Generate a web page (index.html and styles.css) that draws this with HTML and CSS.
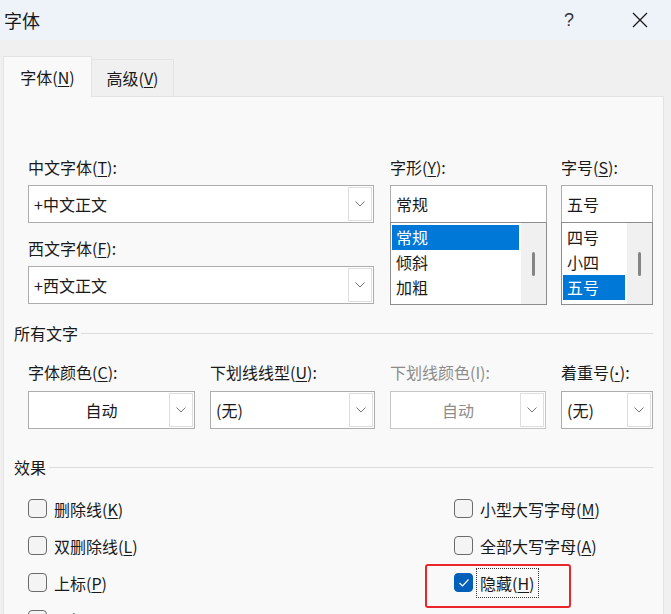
FILE: index.html
```html
<!DOCTYPE html>
<html lang="zh-CN">
<head>
  <meta charset="UTF-8">
  <title>字体</title>
  <link rel="stylesheet" href="styles.css">
</head>
<body>
<div class="titlebar">
  <span class="title">字体</span>
  <span class="help">?</span>
  <svg class="close" width="16" height="16" viewBox="0 0 16 16"><path d="M1 1L15 15M15 1L1 15" stroke="#1a1a1a" stroke-width="1.3" fill="none"/></svg>
</div>

<div class="tabs">
  <div class="tab active">字体(<u>N</u>)</div>
  <div class="tab">高级(<u>V</u>)</div>
</div>

<div class="panel">
  <div class="font-grid">
    <div class="col-name">
      <div class="label">中文字体(<u>T</u>):</div>
      <div class="combo"><span class="value">+中文正文</span><span class="arrow"><svg width="10" height="6" viewBox="0 0 10 6"><path d="M0.5 0.5L5 5L9.5 0.5" stroke="#767676" fill="none"/></svg></span></div>
      <div class="label second">西文字体(<u>F</u>):</div>
      <div class="combo"><span class="value">+西文正文</span><span class="arrow"><svg width="10" height="6" viewBox="0 0 10 6"><path d="M0.5 0.5L5 5L9.5 0.5" stroke="#767676" fill="none"/></svg></span></div>
    </div>
    <div class="col-style">
      <div class="label">字形(<u>Y</u>):</div>
      <div class="field">常规</div>
      <div class="list">
        <div class="items">
          <div class="item selected">常规</div>
          <div class="item">倾斜</div>
          <div class="item">加粗</div>
        </div>
        <div class="track"><span class="thumb"></span></div>
      </div>
    </div>
    <div class="col-size">
      <div class="label">字号(<u>S</u>):</div>
      <div class="field">五号</div>
      <div class="list">
        <div class="items">
          <div class="item">四号</div>
          <div class="item">小四</div>
          <div class="item selected">五号</div>
        </div>
        <div class="track"><span class="thumb"></span></div>
      </div>
    </div>
  </div>

  <div class="group all-text"><span>所有文字</span><span class="rule"></span></div>

  <div class="attr-row">
    <div class="attr color">
      <div class="label">字体颜色(<u>C</u>):</div>
      <div class="combo"><span class="value centered">自动</span><span class="arrow"><svg width="10" height="6" viewBox="0 0 10 6"><path d="M0.5 0.5L5 5L9.5 0.5" stroke="#767676" fill="none"/></svg></span></div>
    </div>
    <div class="attr line-type">
      <div class="label">下划线线型(<u>U</u>):</div>
      <div class="combo"><span class="value">(无)</span><span class="arrow"><svg width="10" height="6" viewBox="0 0 10 6"><path d="M0.5 0.5L5 5L9.5 0.5" stroke="#767676" fill="none"/></svg></span></div>
    </div>
    <div class="attr line-color disabled">
      <div class="label">下划线颜色(I):</div>
      <div class="combo"><span class="value centered">自动</span><span class="arrow"><svg width="10" height="6" viewBox="0 0 10 6"><path d="M0.5 0.5L5 5L9.5 0.5" stroke="#767676" fill="none"/></svg></span></div>
    </div>
    <div class="attr emphasis">
      <div class="label">着重号(<u class="dot">·</u>):</div>
      <div class="combo"><span class="value">(无)</span><span class="arrow"><svg width="10" height="6" viewBox="0 0 10 6"><path d="M0.5 0.5L5 5L9.5 0.5" stroke="#767676" fill="none"/></svg></span></div>
    </div>
  </div>

  <div class="group effects-title"><span>效果</span><span class="rule"></span></div>

  <div class="effects">
    <div class="check"><span class="box"></span><span>删除线(<u>K</u>)</span></div>
    <div class="check"><span class="box"></span><span>小型大写字母(<u>M</u>)</span></div>
    <div class="check"><span class="box"></span><span>双删除线(<u>L</u>)</span></div>
    <div class="check"><span class="box"></span><span>全部大写字母(<u>A</u>)</span></div>
    <div class="check"><span class="box"></span><span>上标(<u>P</u>)</span></div>
    <div class="check marked"><span class="box checked"><svg width="12" height="10" viewBox="0 0 12 10"><path d="M1.5 5L4.5 8L10.5 1.5" stroke="#fff" stroke-width="1.2" fill="none"/></svg></span><span class="focus">隐藏(<u>H</u>)</span></div>
    <div class="check"><span class="box"></span><span>下标(<u>B</u>)</span></div>
    <div class="check"></div>
  </div>
</div>
</body>
</html>
```

FILE: styles.css
```css
* {
  box-sizing: border-box;
}

body {
  margin: 0;
  background: #f0f0f0;
  font-family: "Microsoft YaHei UI", "Noto Sans CJK SC", "Noto Sans", sans-serif;
  font-size: 16px;
  color: #1a1a1a;
  overflow: hidden;
}

u {
  text-underline-offset: 2px;
}

u.dot {
  font-family: "Liberation Sans", sans-serif;
  font-weight: bold;
}

/* title bar */
.titlebar {
  height: 40px;
  background: #eef3f9;
  display: flex;
  align-items: center;
  padding-left: 4px;
}

.title {
  flex: 1;
  font-size: 18px;
}

.help {
  font-size: 18px;
  font-family: "Liberation Sans", sans-serif;
  font-weight: 300;
  color: #333;
  margin-right: 58px;
}

.close {
  margin-right: 23px;
}

/* tabs */
.tabs {
  display: flex;
  align-items: flex-end;
  height: 56px;
  padding-left: 3px;
}

.tab {
  height: 37px;
  width: 82px;
  line-height: 36px;
  text-align: center;
  background: #f0f0f0;
  border: 1px solid #e3e3e3;
  border-left: none;
  border-bottom: none;
}

.tab.active {
  width: 89px;
  height: 41px;
  line-height: 40px;
  background: #f9f9f9;
  border-left: 1px solid #e3e3e3;
  margin-bottom: -1px;
  position: relative;
  z-index: 1;
}

.panel {
  margin-left: 3px;
  width: 661px;
  height: 540px;
  background: #f9f9f9;
  border: 1px solid #e3e3e3;
  padding: 60px 10px 0 10px;
}

.label {
  line-height: 20px;
  height: 20px;
  margin-bottom: 8px;
  white-space: nowrap;
}

.label.second {
  margin-top: 15px;
}

/* font selection */
.font-grid {
  display: flex;
  margin-left: 14px;
}

.col-name {
  width: 346px;
  margin-right: 16px;
}

.col-style {
  width: 157px;
  margin-right: 14px;
}

.col-size {
  width: 92px;
}

.combo {
  height: 38px;
  display: flex;
  background: #fff;
  border: 1px solid #adadad;
}

.combo .value {
  flex: 1;
  line-height: 36px;
  padding-left: 5px;
}

.combo .value.centered {
  text-align: center;
}

.combo .arrow {
  width: 24px;
  margin: 1px 1px 1px 0;
  border: 1px solid #dedede;
  display: flex;
  align-items: center;
  justify-content: center;
}

.field {
  height: 38px;
  line-height: 36px;
  padding-left: 5px;
  background: #fff;
  border: 1px solid #adadad;
}

.list {
  height: 83px;
  margin-top: -1px;
  display: flex;
  background: #fff;
  border: 1px solid #8e8e8e;
}

.items {
  flex: 1;
  padding: 2px 2px 0 1px;
}

.item {
  height: 25px;
  line-height: 25px;
  padding-left: 4px;
}

.item.selected {
  background: #0078d7;
  color: #fff;
}

.track {
  width: 25px;
  background: #f0f0f0;
  display: flex;
  align-items: center;
  justify-content: center;
}

.thumb {
  width: 3px;
  height: 24px;
  border-radius: 2px;
  background: #858585;
}

/* group headings */
.group {
  display: flex;
  align-items: center;
  height: 20px;
  line-height: 20px;
}

.group .rule {
  flex: 1;
  height: 1px;
  background: #dcdcdc;
  margin-left: 3px;
}

.all-text {
  margin-top: 18px;
}

.effects-title {
  margin-top: 28px;
}

/* character attributes */
.attr-row {
  display: flex;
  gap: 15px;
  margin-left: 14px;
  margin-top: 19px;
}

.attr .label {
  margin-bottom: 9px;
}

.attr.color {
  width: 167px;
}

.attr.line-type {
  width: 165px;
}

.attr.line-color {
  width: 156px;
}

.attr.emphasis {
  width: 92px;
}

.attr.disabled .label,
.attr.disabled .value {
  color: #8c8c8c;
}

.attr.disabled .combo {
  border-color: #c6c6c6;
}

/* effects */
.effects {
  display: grid;
  grid-template-columns: 426px 1fr;
  grid-auto-rows: 37px;
  margin-left: 14px;
  margin-top: 13px;
}

.check {
  display: flex;
  align-items: center;
  white-space: nowrap;
}

.box {
  width: 19px;
  height: 19px;
  border: 1px solid #6b6b6b;
  border-radius: 4px;
  background: #f4f4f4;
  margin-right: 7px;
  display: flex;
  align-items: center;
  justify-content: center;
}

.box.checked {
  background: #005fb8;
  border-color: #005fb8;
  margin-right: 3px;
}

.focus {
  line-height: 28px;
  padding: 0 3px;
  border: 1px dotted #333;
}

.marked {
  position: relative;
}

.marked::after {
  content: "";
  position: absolute;
  left: -29px;
  top: 0;
  width: 142px;
  height: 40px;
  border: 2px solid #e8262b;
  border-radius: 3px;
}
```
